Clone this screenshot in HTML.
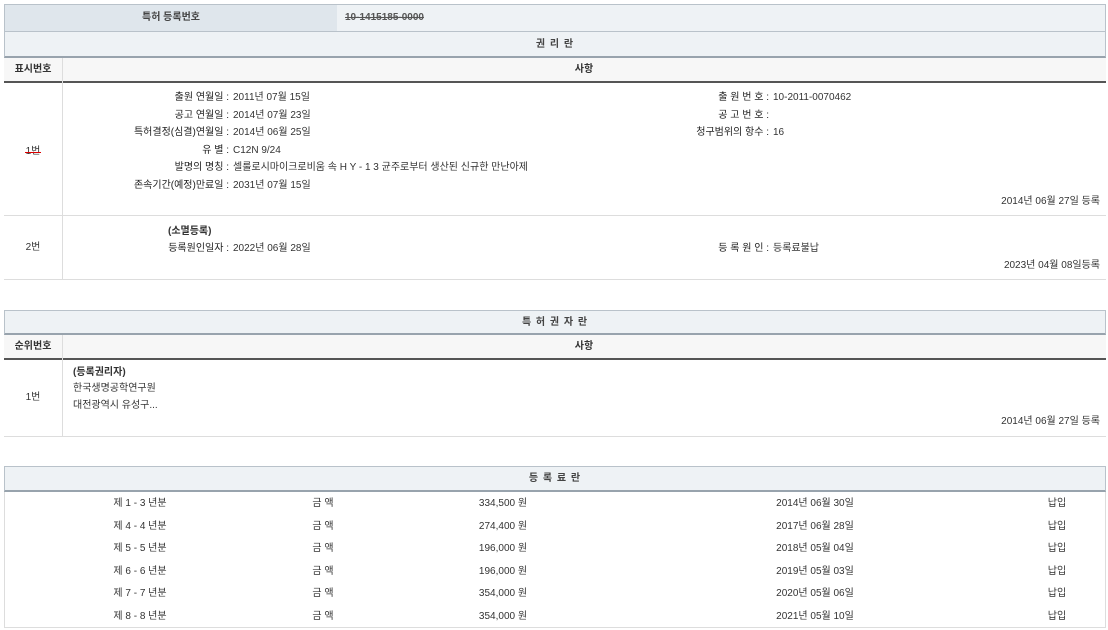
<!DOCTYPE html>
<html><head><meta charset="utf-8"><style>
*{margin:0;padding:0;box-sizing:border-box}
body{width:1108px;height:630px;background:#fff;font-family:"Liberation Sans","Noto Sans CJK KR",sans-serif;font-size:10px;color:#333;position:relative;overflow:hidden}
div{position:absolute}
.t{white-space:nowrap;line-height:12px}
.hd{background:#eef2f5;border:1px solid #b9c2ca;border-bottom:2px solid #98a3ad;text-align:center;font-weight:bold;color:#444;line-height:22px;letter-spacing:1px}
.ch{background:#f7f7f7;border-bottom:2px solid #555;}
.r{text-align:right}
.c{text-align:center}
.l{color:#222}
</style></head><body>
<div style="left:4px;top:4px;width:334px;height:28px;background:#dfe6ec;border:1px solid #b9c2ca;text-align:center;line-height:26px;font-weight:bold;color:#444">특허 등록번호</div>
<div style="left:337px;top:4px;width:769px;height:28px;background:#eef2f5;border:1px solid #b9c2ca;border-left:none;line-height:26px;padding-left:8px;font-weight:bold;color:#555;text-decoration:line-through">10-1415185-0000</div>
<div class="hd" style="left:4px;top:31px;width:1102px;height:27px;line-height:25px">권 리 란</div>
<div class="ch" style="left:4px;top:58px;width:1102px;height:25px"></div>
<div class="t c" style="left:4px;top:64px;width:58px;font-weight:bold">표시번호</div>
<div class="t c" style="left:62px;top:64px;width:1044px;font-weight:bold">사항</div>
<div style="left:62px;top:58px;width:1px;height:222px;background:#ddd"></div>
<div style="left:4px;top:215px;width:1102px;height:1px;background:#ddd"></div>
<div style="left:4px;top:279px;width:1102px;height:1px;background:#ddd"></div>
<div class="t c" style="left:4px;top:146px;width:58px">1번</div>
<div style="left:25px;top:152px;width:16px;height:1px;background:#d00"></div>
<div class="t r l" style="left:62px;top:92px;width:167px">출원 연월일 :</div><div class="t" style="left:233px;top:92px">2011년 07월 15일</div>
<div class="t r l" style="left:62px;top:110px;width:167px">공고 연월일 :</div><div class="t" style="left:233px;top:110px">2014년 07월 23일</div>
<div class="t r l" style="left:62px;top:127px;width:167px">특허결정(심결)연월일 :</div><div class="t" style="left:233px;top:127px">2014년 06월 25일</div>
<div class="t r l" style="left:62px;top:145px;width:167px">유 별 :</div><div class="t" style="left:233px;top:145px">C12N 9/24</div>
<div class="t r l" style="left:62px;top:162px;width:167px">발명의 명칭 :</div><div class="t" style="left:233px;top:162px">셀룰로시마이크로비움 속 H Y - 1 3 균주로부터 생산된 신규한 만난아제</div>
<div class="t r l" style="left:62px;top:180px;width:167px">존속기간(예정)만료일 :</div><div class="t" style="left:233px;top:180px">2031년 07월 15일</div>
<div class="t r l" style="left:560px;top:92px;width:209px">출 원 번 호 :</div><div class="t" style="left:773px;top:92px">10-2011-0070462</div>
<div class="t r l" style="left:560px;top:110px;width:209px">공 고 번 호 :</div>
<div class="t r l" style="left:560px;top:127px;width:209px">청구범위의 항수 :</div><div class="t" style="left:773px;top:127px">16</div>
<div class="t r" style="left:800px;top:196px;width:300px">2014년 06월 27일 등록</div>
<div class="t c" style="left:4px;top:242px;width:58px">2번</div>
<div class="t" style="left:168px;top:226px;font-weight:bold">(소멸등록)</div>
<div class="t r l" style="left:62px;top:243px;width:167px">등록원인일자 :</div><div class="t" style="left:233px;top:243px">2022년 06월 28일</div>
<div class="t r l" style="left:560px;top:243px;width:209px">등 록 원 인 :</div><div class="t" style="left:773px;top:243px">등록료불납</div>
<div class="t r" style="left:800px;top:260px;width:300px">2023년 04월 08일등록</div>
<div class="hd" style="left:4px;top:310px;width:1102px;height:25px;line-height:23px">특 허 권 자 란</div>
<div class="ch" style="left:4px;top:335px;width:1102px;height:25px"></div>
<div class="t c" style="left:4px;top:341px;width:58px;font-weight:bold">순위번호</div>
<div class="t c" style="left:62px;top:341px;width:1044px;font-weight:bold">사항</div>
<div style="left:62px;top:335px;width:1px;height:102px;background:#ddd"></div>
<div style="left:4px;top:436px;width:1102px;height:1px;background:#ddd"></div>
<div class="t c" style="left:4px;top:392px;width:58px">1번</div>
<div class="t" style="left:73px;top:367px;font-weight:bold">(등록권리자)</div>
<div class="t" style="left:73px;top:383px">한국생명공학연구원</div>
<div class="t" style="left:73px;top:400px">대전광역시 유성구...</div>
<div class="t r" style="left:800px;top:416px;width:300px">2014년 06월 27일 등록</div>
<div class="hd" style="left:4px;top:466px;width:1102px;height:26px;line-height:24px">등 록 료 란</div>
<div style="left:4px;top:492px;width:1102px;height:136px;border:1px solid #ddd;border-top:none"></div>
<div class="t c" style="left:60px;top:493px;width:160px;line-height:22.6px">제 1 - 3 년분<br>제 4 - 4 년분<br>제 5 - 5 년분<br>제 6 - 6 년분<br>제 7 - 7 년분<br>제 8 - 8 년분</div>
<div class="t c" style="left:283px;top:493px;width:80px;line-height:22.6px">금 액<br>금 액<br>금 액<br>금 액<br>금 액<br>금 액</div>
<div class="t c" style="left:453px;top:493px;width:100px;line-height:22.6px">334,500 원<br>274,400 원<br>196,000 원<br>196,000 원<br>354,000 원<br>354,000 원</div>
<div class="t c" style="left:755px;top:493px;width:120px;line-height:22.6px">2014년 06월 30일<br>2017년 06월 28일<br>2018년 05월 04일<br>2019년 05월 03일<br>2020년 05월 06일<br>2021년 05월 10일</div>
<div class="t c" style="left:1027px;top:493px;width:60px;line-height:22.6px">납입<br>납입<br>납입<br>납입<br>납입<br>납입</div>
</body></html>
